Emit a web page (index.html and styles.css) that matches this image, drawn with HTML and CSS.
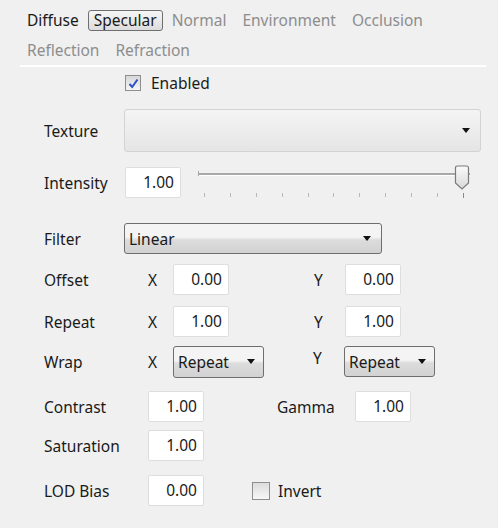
FILE: index.html
```html
<!DOCTYPE html>
<html lang="en">
<head>
    <meta charset="UTF-8">
    <title>Specular</title>
    <link rel="stylesheet" href="styles.css">
</head>
<body>

<div class="tabs">
    <div class="tab-row">
        <span class="tab active-plain">Diffuse</span>
        <span class="tab selected">Specular</span>
        <span class="tab">Normal</span>
        <span class="tab">Environment</span>
        <span class="tab">Occlusion</span>
    </div>
    <div class="tab-row second">
        <span class="tab">Reflection</span>
        <span class="tab">Refraction</span>
    </div>
</div>
<div class="separator"></div>

<div class="panel">
    <div class="row row-enabled">
        <span class="check checked">
            <svg width="11" height="11" viewBox="0 0 11 11"><path d="M1.5 6 L4.2 9 L9.5 1.5" fill="none" stroke="#2b50c8" stroke-width="2"/></svg>
        </span>
        <span class="check-label">Enabled</span>
    </div>

    <div class="row row-texture">
        <span class="label">Texture</span>
        <div class="combo combo-light combo-texture"><span class="arrow"></span></div>
    </div>

    <div class="row row-intensity">
        <span class="label">Intensity</span>
        <div class="field field-intensity">1.00</div>
        <div class="slider">
            <div class="track"></div>
            <div class="thumb">
                <svg width="16" height="25" viewBox="0 0 16 25">
                    <defs>
                        <linearGradient id="tg" x1="0" y1="0" x2="0" y2="1">
                            <stop offset="0" stop-color="#fbfbfb"/>
                            <stop offset="1" stop-color="#d8d8d8"/>
                        </linearGradient>
                    </defs>
                    <path d="M1.5 3 Q1.5 1 3.5 1 L12.5 1 Q14.5 1 14.5 3 L14.5 18 L8 24 L1.5 18 Z" fill="url(#tg)" stroke="#7a7a7a" stroke-width="1.2"/>
                </svg>
            </div>
            <div class="ticks">
                <i></i><i></i><i></i><i></i><i></i><i></i><i></i><i></i><i></i><i></i><i class="end"></i>
            </div>
        </div>
    </div>

    <div class="row row-filter">
        <span class="label">Filter</span>
        <div class="combo combo-dark combo-filter"><span class="combo-text">Linear</span><span class="arrow"></span></div>
    </div>

    <div class="row row-offset">
        <span class="label">Offset</span>
        <span class="axis">X</span>
        <div class="field">0.00</div>
        <span class="axis axis-y">Y</span>
        <div class="field">0.00</div>
    </div>

    <div class="row row-repeat">
        <span class="label">Repeat</span>
        <span class="axis">X</span>
        <div class="field">1.00</div>
        <span class="axis axis-y">Y</span>
        <div class="field">1.00</div>
    </div>

    <div class="row row-wrap">
        <span class="label">Wrap</span>
        <span class="axis">X</span>
        <div class="combo combo-dark combo-wrap"><span class="combo-text">Repeat</span><span class="arrow"></span></div>
        <span class="axis axis-y axis-wrap-y">Y</span>
        <div class="combo combo-dark combo-wrap combo-wrap-y"><span class="combo-text">Repeat</span><span class="arrow"></span></div>
    </div>

    <div class="row row-contrast">
        <span class="label short">Contrast</span>
        <div class="field">1.00</div>
        <span class="label gamma">Gamma</span>
        <div class="field">1.00</div>
    </div>

    <div class="row row-saturation">
        <span class="label short">Saturation</span>
        <div class="field">1.00</div>
    </div>

    <div class="row row-lod">
        <span class="label short">LOD Bias</span>
        <div class="field">0.00</div>
        <span class="check invert-check"></span>
        <span class="check-label">Invert</span>
    </div>
</div>

</body>
</html>
```

FILE: styles.css
```css
body {
    margin: 0;
    background: #f0f0f0;
    font-family: "Noto Sans", "Open Sans", sans-serif;
    font-size: 15.5px;
    color: #1a1a1a;
}

.tabs {
    padding: 9px 0 0 21px;
}
.tab-row {
    display: flex;
    height: 22px;
    align-items: center;
}
.tab-row.second {
    margin-top: 8px;
}
.tab {
    color: #8d8d8d;
    padding: 0 5px;
    margin-right: 4px;
    border: 1px solid transparent;
    line-height: 19px;
}
.tab.active-plain {
    color: #1a1a1a;
    margin-right: 3px;
}
.tab.selected {
    color: #1a1a1a;
    border: 1px solid #6f6f6f;
    border-radius: 3px;
    background: linear-gradient(#f6f6f6, #dcdcdc);
    margin-right: 3px;
}
.separator {
    margin: 4px 12px 0 20px;
    height: 2px;
    background: #ffffff;
}

.panel {
    padding-left: 44px;
}
.row {
    display: flex;
    align-items: center;
}
.label {
    width: 80px;
}
.label.short {
    width: 104px;
}

.row-enabled {
    margin-top: 7px;
    height: 18px;
    padding-left: 81px;
}
.check {
    box-sizing: border-box;
    width: 16px;
    height: 16px;
    border: 1px solid #8e8e8e;
    background: linear-gradient(#dcdcdc, #f7f7f7);
    display: flex;
    align-items: center;
    justify-content: center;
}
.check.checked {
    background: linear-gradient(#d7d7d7, #f5f5f5);
}
.check-label {
    margin-left: 10px;
}

.row-texture {
    margin-top: 17px;
    height: 43px;
}
.combo {
    box-sizing: border-box;
    position: relative;
    height: 100%;
    border-radius: 3px;
    display: flex;
    align-items: center;
}
.combo-light {
    border: 1px solid #d3d3d3;
    background: linear-gradient(#f4f4f4, #e5e5e5);
}
.combo-dark {
    border: 1px solid #6e6e6e;
    background: linear-gradient(#f4f4f4 45%, #dcdcdc 55%, #d2d2d2);
}
.combo-texture {
    width: 357px;
}
.combo-text {
    padding-left: 4px;
}
.arrow {
    position: absolute;
    right: 10px;
    top: 50%;
    margin-top: -3px;
    width: 0;
    height: 0;
    border-left: 4px solid transparent;
    border-right: 4px solid transparent;
    border-top: 5px solid #111111;
}

.row-intensity {
    margin-top: 15px;
    height: 31px;
}
.field {
    box-sizing: border-box;
    width: 56px;
    height: 31px;
    background: #ffffff;
    border: 1px solid #dedede;
    border-radius: 2px;
    text-align: right;
    padding-right: 6px;
    line-height: 28px;
}
.field-intensity {
    width: 56px;
    margin-left: 1px;
}
.slider {
    position: relative;
    margin-left: 17px;
    width: 274px;
    height: 31px;
}
.track {
    position: absolute;
    left: 0;
    right: 2px;
    top: 6px;
    height: 3px;
    border-top: 2px solid #a8a8a8;
    border-bottom: 1px solid #ffffff;
    background: #d8d8d8;
    box-sizing: border-box;
}
.track::before {
    content: "";
    position: absolute;
    left: 0;
    top: -4px;
    width: 1px;
    height: 5px;
    background: #a8a8a8;
}
.thumb {
    position: absolute;
    left: 256px;
    top: -2px;
}
.ticks {
    position: absolute;
    left: 6px;
    top: 26px;
    width: 260px;
    display: flex;
    justify-content: space-between;
}
.ticks i {
    width: 1px;
    height: 4px;
    background: #b9b9b9;
}
.ticks i.end {
    height: 5px;
    background: #8a8a8a;
}

.row-filter {
    margin-top: 25px;
    height: 31px;
}
.combo-filter {
    width: 258px;
}

.axis {
    width: 25px;
    padding-left: 24px;
}
.axis-y {
    width: 31px;
    padding-left: 85px;
}
.row-offset {
    margin-top: 10px;
    height: 31px;
}
.row-repeat {
    margin-top: 11px;
    height: 31px;
}
.row-wrap {
    margin-top: 9px;
    height: 32px;
}
.combo-wrap {
    width: 91px;
}
.combo-wrap .arrow {
    right: 8px;
}
.axis-wrap-y {
    padding-left: 49px;
    align-self: flex-start;
    line-height: 24px;
}
.combo-wrap-y {
    height: 31px;
    align-self: flex-start;
}

.row-contrast {
    margin-top: 13px;
    height: 31px;
}
.gamma {
    margin-left: 73px;
    width: 78px;
}
.row-saturation {
    margin-top: 8px;
    height: 31px;
}
.row-lod {
    margin-top: 14px;
    height: 31px;
}
.invert-check {
    width: 18px;
    height: 18px;
    margin-left: 48px;
}
.row-lod .check-label {
    margin-left: 8px;
}
```
